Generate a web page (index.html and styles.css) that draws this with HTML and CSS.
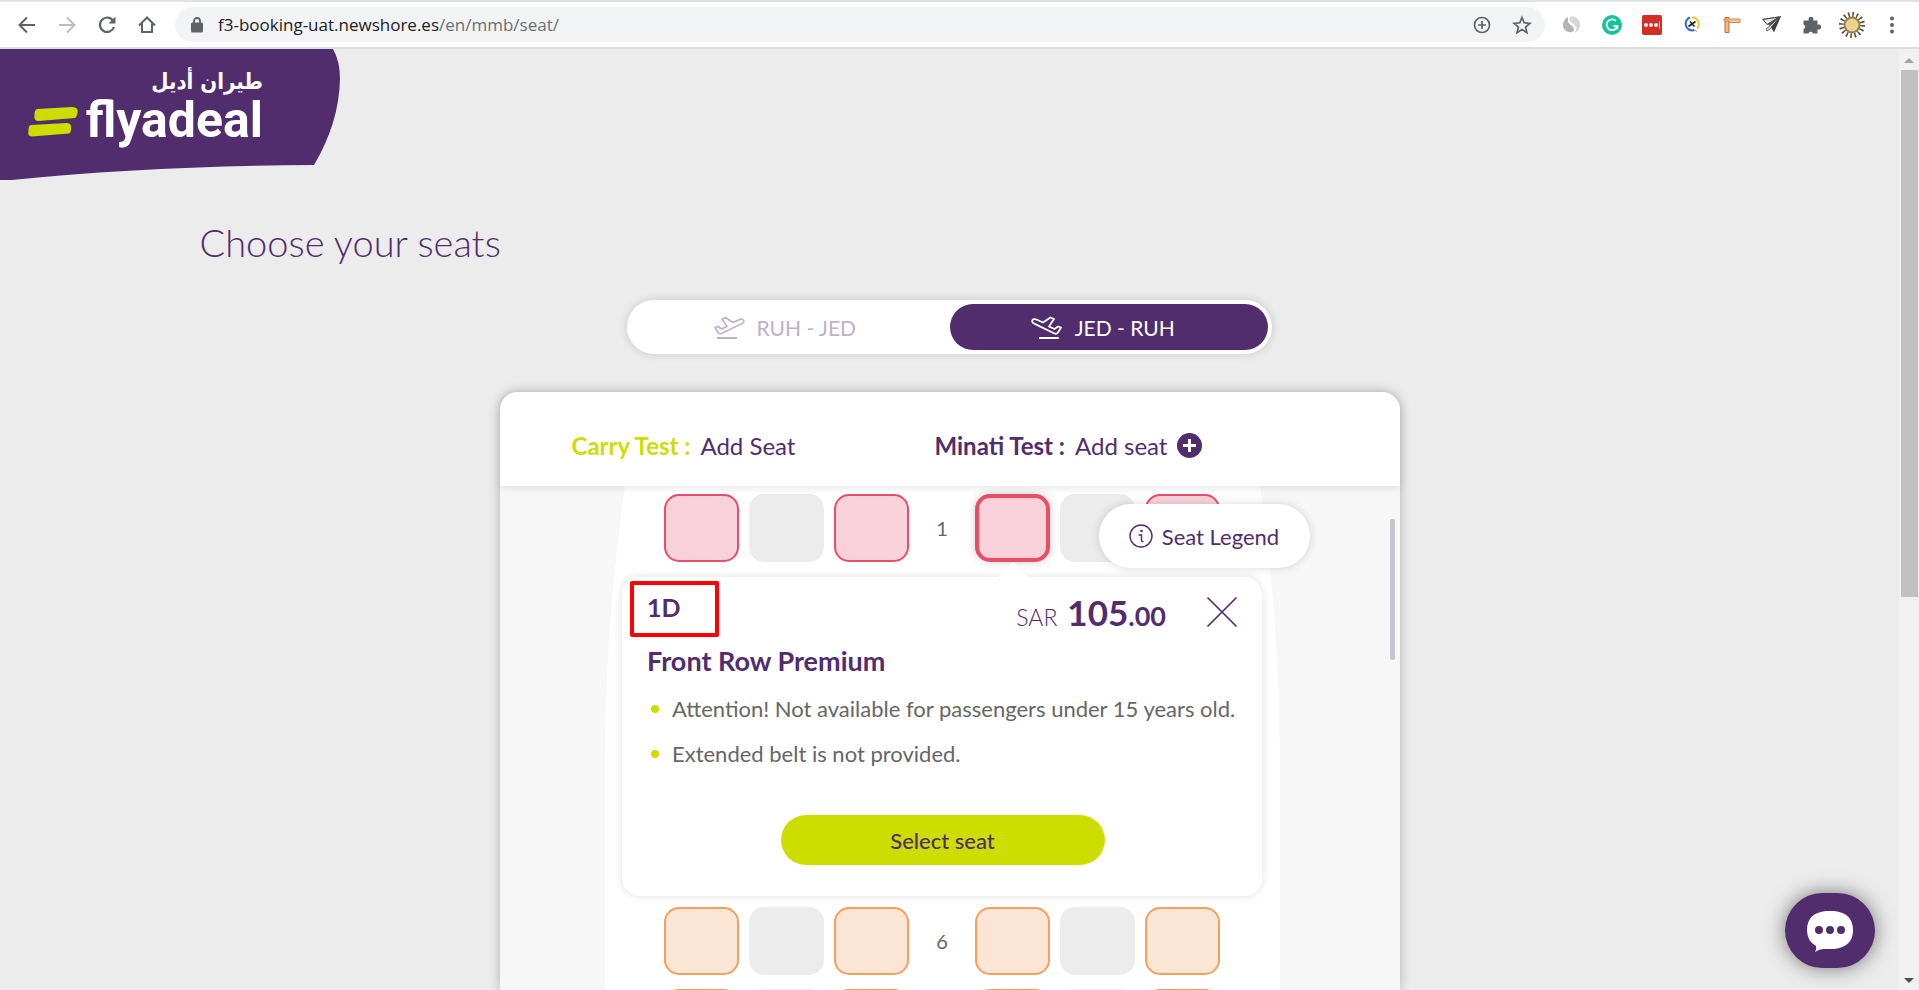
FILE: index.html
```html
<!DOCTYPE html>
<html lang="en">
<head>
<meta charset="utf-8">
<title>Choose your seats</title>
<link rel="stylesheet" href="styles.css">
</head>
<body>
<header class="toolbar">
  <nav class="nav-buttons">
    <button class="tool" aria-label="Back"><svg width="20" height="20" viewBox="0 0 20 20" fill="none" stroke="#5f6368" stroke-width="2"><path d="M18 10H3M10 2.500L2.500 10l7.500 7.500"/></svg></button>
    <button class="tool" aria-label="Forward"><svg width="20" height="20" viewBox="0 0 20 20" fill="none" stroke="#babcbe" stroke-width="2"><path d="M2 10h15M10 2.500l7.500 7.500-7.500 7.500"/></svg></button>
    <button class="tool" aria-label="Reload"><svg width="20" height="20" viewBox="0 0 20 20"><path d="M16 5.500A7.200 7.200 0 1 0 17 12" fill="none" stroke="#5f6368" stroke-width="2.200"/><path d="M18.500 1.500v7h-7z" fill="#5f6368"/></svg></button>
    <button class="tool" aria-label="Home"><svg width="20" height="20" viewBox="0 0 20 20" fill="none" stroke="#5f6368" stroke-width="2"><path d="M2 10.500L10 2.500l8 8M5 8.500V17h10V8.500"/></svg></button>
  </nav>
  <div class="omnibox">
    <svg class="lock" width="14" height="16" viewBox="0 0 14 16"><rect x="1" y="5.500" width="12" height="10" rx="1.500" fill="#5f6368"/><path d="M4 6V4a3 3 0 0 1 6 0v2" fill="none" stroke="#5f6368" stroke-width="1.800"/></svg>
    <span class="url">f3-booking-uat.newshore.es<span class="path">/en/mmb/seat/</span></span>
    <button class="tool" aria-label="Zoom"><svg width="18" height="18" viewBox="0 0 18 18" fill="none" stroke="#5f6368" stroke-width="1.700"><circle cx="9" cy="9" r="7.500"/><path d="M9 5v8M5 9h8"/></svg></button>
    <button class="tool" aria-label="Bookmark"><svg width="20" height="20" viewBox="0 0 20 20" fill="none" stroke="#5f6368" stroke-width="1.700"><path d="M10 2.500l2.200 5.300 5.700.5-4.300 3.700 1.300 5.600L10 14.600l-4.900 3 1.300-5.600L2.100 8.300l5.700-.5z"/></svg></button>
  </div>
  <div class="extensions">
    <button class="tool" aria-label="Similar sites"><svg width="20" height="20" viewBox="0 0 20 20"><path d="M6 2C0 5 0 12 3 15c3 3 8 3 9 0 1-4-6-5-6-9z" fill="#b4b4b4"/><path d="M8 2c5-2 11 3 10 9-1 4-3 6-6 7 3-3 3-6 0-8.500C9 7 6 6 8 2z" fill="#d6d6d6"/></svg></button>
    <button class="tool" aria-label="Writing check"><svg width="20" height="20" viewBox="0 0 20 20"><circle cx="10" cy="10" r="10" fill="#15c39a"/><path d="M14 6A5.400 5.400 0 1 0 15.300 11H11M15.300 11v3.500" fill="none" stroke="#fff" stroke-width="1.800"/></svg></button>
    <button class="tool" aria-label="Passwords"><svg width="20" height="20" viewBox="0 0 20 20"><rect width="20" height="20" rx="2" fill="#d32d27"/><g fill="#fff"><circle cx="4" cy="10" r="1.900"/><circle cx="9" cy="10" r="1.900"/><circle cx="14" cy="10" r="1.900"/></g><path d="M17.500 6.500v7" stroke="#fff"/></svg></button>
    <button class="tool" aria-label="Compass"><svg width="20" height="20" viewBox="0 0 20 20" fill="none"><path d="M8 2.500A6.600 6.600 0 1 0 12.500 15" stroke="#2f66c9" stroke-width="2"/><path d="M10 2.500a6.600 6.600 0 0 1 5 11" stroke="#fbc02d" stroke-width="2"/><path d="M6.500 11.500l7-5M8 6.500l4.500 5" stroke="#222" stroke-width="1.600"/><path d="M13 15l2 2" stroke="#aaa"/></svg></button>
    <button class="tool" aria-label="Ruler"><svg width="20" height="20" viewBox="0 0 20 20"><path d="M3 2.500h4v15H3z" fill="#f3b98a" stroke="#b9713a"/><path d="M2 4h16v3.500H7.500V6H2z" fill="#f6c49a" stroke="#d08a52"/></svg></button>
    <button class="tool" aria-label="Send"><svg width="22" height="20" viewBox="0 0 22 20"><path d="M1 4L20 1 13 17l-3-5z" fill="#555"/><path d="M2 4.500L18 2 6 9.500z" fill="#e8e8e8" stroke="#444"/><path d="M5 14l14-12-9 11-4 3z" fill="#ddd" stroke="#444" stroke-width=".8"/><path d="M20 1l-7 16-3-5z" fill="#3f3f3f"/></svg></button>
    <button class="tool" aria-label="Extensions"><svg width="20" height="20" viewBox="0 0 20 20" fill="#5f6368"><path d="M1.500 5.500h5.300a2.500 2.500 0 1 1 4.400 0h4.300v4.300a2.500 2.500 0 1 1 0 4.400v4.300h-4.500a2.400 2.400 0 0 0-4.600 0H1.500V14a2.400 2.400 0 0 0 0-4.500z"/></svg></button>
    <button class="tool" aria-label="Profile"><svg width="28" height="28" viewBox="0 0 28 28"><circle cx="14" cy="14" r="10.500" fill="none" stroke="#5a523b" stroke-width="5" stroke-dasharray="1.600 2.523"/><circle cx="14" cy="14" r="8.500" fill="#8f8259"/><circle cx="14" cy="14" r="6.500" fill="#ecd28a"/></svg></button>
    <button class="tool" aria-label="Menu"><svg width="20" height="20" viewBox="0 0 20 20" fill="#5f6368"><circle cx="10" cy="3.500" r="2"/><circle cx="10" cy="10" r="2"/><circle cx="10" cy="16.500" r="2"/></svg></button>
  </div>
</header>

<div class="viewport">
  <div class="page">
    <a class="brand" href="#">
      <svg class="brand-shape" width="340" height="131" viewBox="0 0 340 131"><path d="M0 0H333Q340 12 340 30Q339 74 314 116Q150 117 12 131H0z" fill="#522d6d"/><g fill="#cddd00"><path d="M37 60l35-2q7 0 5.500 6-1 5-3 5l-36 3q-5 0-4-6 0-5 2.500-6z"/><path d="M31 76l36-2q5 0 4 6 0 4-2 4.500l-37 3q-5 0-3.500-6.500 0-4.500 2.500-5z"/></g></svg>
      <span class="brand-text"><span class="brand-ar" lang="ar" dir="rtl">طيران أديل</span><span class="brand-en">flyadeal</span></span>
    </a>
    <main class="content">
      <h1 class="title">Choose your seats</h1>
      <div class="journeys">
        <button class="journey"><svg width="32" height="24" viewBox="0 0 32 24" fill="none" stroke="currentColor" stroke-width="1.600" stroke-linejoin="round"><path d="M2 12.500l3-1 3.500 2.500 5.500-2.500-5-7.500 3.500-1.500 7.500 5 6-2.800q4-1.500 4.800 1 .5 2-2.500 3.200L8.500 18.500q-2 .8-3.500-1z"/><path d="M4 23h20" stroke-width="2"/></svg>RUH - JED</button>
        <button class="journey active"><svg width="32" height="24" viewBox="0 0 32 24" fill="none" stroke="currentColor" stroke-width="1.800" stroke-linejoin="round"><path d="M30 12.500l-3-1-3.500 2.500-5.500-2.500 5-7.500-3.500-1.500-7.500 5-6-2.800q-4-1.500-4.800 1-.5 2 2.500 3.200L23.500 18.500q2 .8 3.500-1z"/><path d="M8 23h20" stroke-width="2"/></svg>JED - RUH</button>
      </div>
      <section class="card">
        <div class="passengers">
          <div class="passenger"><strong class="name current">Carry Test :</strong><span>Add Seat</span></div>
          <div class="passenger"><strong class="name">Minati Test :</strong><span>Add seat</span><button class="add" aria-label="Add seat"><svg width="25" height="25" viewBox="0 0 25 25"><circle cx="12.500" cy="12.500" r="12.500" fill="#522d6d"/><path d="M12.500 6v13M6 12.500h13" stroke="#fff" stroke-width="3"/></svg></button></div>
        </div>
        <div class="cabin">
          <svg class="fuselage" width="675" height="510" viewBox="0 0 675 510"><path d="M20 0Q0 140 0 280V510H675V280Q675 140 655 0z" fill="#fff"/></svg>
          <div class="rows">
            <div class="row">
              <div class="block"><button class="seat premium" aria-label="1A"></button><button class="seat" disabled aria-label="1B"></button><button class="seat premium" aria-label="1C"></button></div>
              <span class="number">1</span>
              <div class="block"><button class="seat premium selected" aria-label="1D"></button><button class="seat" disabled aria-label="1E"></button><button class="seat premium" aria-label="1F"></button></div>
            </div>
            <article class="detail">
              <div class="detail-top">
                <span class="code">1D</span>
                <span class="price"><span class="currency">SAR</span><span class="amount">105<span class="cents">.00</span></span></span>
                <button class="close" aria-label="Close"><svg width="32" height="32" viewBox="0 0 32 32" stroke="#522d6d" stroke-width="1.700"><path d="M1.500 1.500l29 29M30.500 1.500l-29 29"/></svg></button>
              </div>
              <h2 class="detail-name">Front Row Premium</h2>
              <ul class="notes"><li>Attention! Not available for passengers under 15 years old.</li><li>Extended belt is not provided.</li></ul>
              <button class="select">Select seat</button>
              <span class="marker"></span>
            </article>
            <div class="row">
              <div class="block"><button class="seat front" aria-label="6A"></button><button class="seat" disabled aria-label="6B"></button><button class="seat front" aria-label="6C"></button></div>
              <span class="number">6</span>
              <div class="block"><button class="seat front" aria-label="6D"></button><button class="seat" disabled aria-label="6E"></button><button class="seat front" aria-label="6F"></button></div>
            </div>
            <div class="row">
              <div class="block"><button class="seat front" aria-label="7A"></button><button class="seat" disabled aria-label="7B"></button><button class="seat front" aria-label="7C"></button></div>
              <span class="number"></span>
              <div class="block"><button class="seat front" aria-label="7D"></button><button class="seat" disabled aria-label="7E"></button><button class="seat front" aria-label="7F"></button></div>
            </div>
          </div>
          <span class="cabin-thumb"></span>
          <button class="legend"><svg width="24" height="24" viewBox="0 0 24 24" fill="none" stroke="#522d6d" stroke-width="1.400"><circle cx="12" cy="12" r="11"/><path d="M9.500 11h3v5q0 2 2 1.500"/><circle cx="12.500" cy="7" r=".6"/></svg>Seat Legend</button>
        </div>
      </section>
    </main>
    <button class="chat" aria-label="Chat"><svg width="48" height="42" viewBox="0 0 48 42"><path d="M20 1h8q19 2 19 19t-19 19H18q-5 0-9 3 2-3 1-6Q1 31 1 20 1 3 20 1z" fill="#fff"/><g fill="#522d6d"><circle cx="13" cy="20" r="4"/><circle cx="24" cy="20" r="4"/><circle cx="35" cy="20" r="4"/></g></svg></button>
  </div>
  <div class="scrollbar">
    <svg width="10" height="5" viewBox="0 0 10 5"><path d="M0 5l5-5 5 5z" fill="#a3a3a3"/></svg>
    <span class="thumb"></span>
    <svg width="10" height="5" viewBox="0 0 10 5"><path d="M0 0l5 5 5-5z" fill="#505050"/></svg>
  </div>
</div>
</body>
</html>
```

FILE: styles.css
```css
*, *::before, *::after { box-sizing: border-box; }
body {
  margin: 0;
  height: 100vh;
  overflow: hidden;
  display: flex;
  flex-direction: column;
  font-family: Lato, "Open Sans", sans-serif;
  color: #522d6d;
  background: #ececec;
}
button { font: inherit; color: inherit; border: 0; padding: 0; background: none; }
svg { display: block; flex: none; }

/* Browser toolbar */
.toolbar {
  flex: none;
  height: 49px;
  display: flex;
  align-items: center;
  padding: 0 7px;
  border-top: 2px solid #dee1e6;
  border-bottom: 2px solid #dadce0;
  background: #fff;
}
.tool { width: 40px; height: 36px; display: grid; place-items: center; flex: none; }
.nav-buttons, .extensions { display: flex; }
.extensions { margin-left: 7px; }
.omnibox {
  flex: 1;
  height: 35px;
  margin-left: 8px;
  padding: 0 3px 0 15px;
  display: flex;
  align-items: center;
  border-radius: 18px;
  background: #f1f3f4;
}
.url { flex: 1; margin-left: 14px; font: 17px "Open Sans", sans-serif; color: #202124; }
.path { color: #6b6f73; }

/* Page frame */
.viewport { flex: 1; min-height: 0; display: flex; }
.page { flex: 1; display: flex; flex-direction: column; position: relative; overflow: hidden; }
.scrollbar {
  width: 20px;
  padding: 9px 0 7px;
  display: flex;
  flex-direction: column;
  align-items: center;
  justify-content: space-between;
  background: #f1f1f1;
}
.thumb { width: 17px; height: 57%; margin: 7px 0 auto; background: #c1c1c1; }

.brand { flex: none; display: block; position: relative; width: 340px; text-decoration: none; color: #fff; }
.brand-text {
  position: absolute;
  left: 88px;
  top: 20px;
  width: 175px;
  display: flex;
  flex-direction: column;
  align-items: flex-end;
}
.brand-ar { font: bold 22px/26px "DejaVu Sans Condensed", "DejaVu Sans", sans-serif; }
.brand-en { font: bold 50px/50px Roboto, sans-serif; }

.content {
  flex: 1;
  min-height: 0;
  width: 100%;
  max-width: 1500px;
  margin: 0 auto;
  display: flex;
  flex-direction: column;
  align-items: center;
}
.title { align-self: flex-start; margin: 41px 0 36px; font-size: 38px; line-height: 43px; font-weight: 300; }

.journeys {
  width: 100%;
  max-width: 645px;
  padding: 4px;
  display: flex;
  border-radius: 27px;
  background: #fff;
  box-shadow: 0 0 10px rgba(0, 0, 0, .15);
}
.journey {
  flex: 1;
  height: 46px;
  padding-right: 12px;
  display: flex;
  align-items: center;
  justify-content: center;
  gap: 12px;
  border-radius: 23px;
  font-size: 21px;
  color: #bfb0cb;
}
.journey.active { color: #fff; background: #522d6d; }

.card {
  flex: 1;
  min-height: 0;
  width: 100%;
  max-width: 900px;
  margin-top: 38px;
  display: flex;
  flex-direction: column;
  border-radius: 18px 18px 0 0;
  background: #f7f7f7;
  box-shadow: 0 0 12px rgba(0, 0, 0, .25);
}
.passengers {
  position: relative;
  z-index: 1;
  flex: none;
  height: 94px;
  padding: 12px 72px 0;
  display: grid;
  grid-template-columns: 363px 1fr;
  align-items: center;
  border-radius: 18px 18px 0 0;
  background: #fff;
  box-shadow: 0 2px 8px rgba(0, 0, 0, .1);
  font-size: 24px;
}
.passenger { display: flex; align-items: center; gap: 10px; }
.current { color: #cddd00; }

/* Seat map */
.cabin { flex: 1; min-height: 0; position: relative; padding-right: 15px; }
.fuselage { position: absolute; top: 0; left: 105px; }
.rows { position: relative; height: 100%; overflow: hidden; padding-top: 8px; display: flex; flex-direction: column; align-items: center; }
.row { flex: none; display: flex; align-items: center; margin-bottom: 14px; }
.block { display: flex; gap: 10px; }
.number { width: 66px; text-align: center; font-size: 20px; color: #666; }
.seat { width: 75px; height: 68px; border-radius: 15px; background: #ececec; }
.premium { border: 2px solid #e94e69; background: #f9d1da; }
.front { border: 2px solid #f3a05f; background: #fbe6d6; }
.selected { border-width: 4px; box-shadow: 0 0 10px rgba(0, 0, 0, .2); }

.detail {
  position: relative;
  flex: none;
  width: 640px;
  margin: 1px 0 11px;
  padding: 15px 24px 31px 25px;
  display: flex;
  flex-direction: column;
  border-radius: 18px;
  background: #fff;
  box-shadow: 0 0 10px rgba(0, 0, 0, .12);
}
.marker {
  position: absolute;
  left: 376px;
  top: -15px;
  width: 30px;
  height: 15px;
  background: #fff;
  clip-path: polygon(50% 0, 100% 100%, 0 100%);
}
.detail-top { display: flex; align-items: center; height: 40px; }
.code { align-self: flex-start; font-size: 25px; line-height: 30px; font-weight: 700; position: relative; }
.code::after {
  content: "";
  position: absolute;
  left: -17px;
  top: -11px;
  width: 89px;
  height: 56px;
  border: 4px solid #f00;
  border-radius: 2px;
}
.price { margin-left: auto; display: flex; align-items: baseline; gap: 10px; }
.currency { font-size: 23px; font-weight: 300; }
.amount { font-size: 35px; font-weight: 700; }
.cents { font-size: 27px; }
.close { margin-left: 40px; }
.detail-name { margin: 13px 0 0; font-size: 27px; line-height: 32px; font-weight: 700; }
.notes { list-style: none; margin: 9px 0 0; padding: 0; font-size: 22px; line-height: 45px; color: #666; }
.notes li { display: flex; align-items: center; gap: 13px; }
.notes li::before { content: ""; width: 8px; height: 8px; margin-left: 4px; border-radius: 50%; background: #cddd00; }
.select {
  align-self: center;
  width: 324px;
  height: 50px;
  margin-top: 39px;
  border-radius: 25px;
  background: #cddd00;
  font-size: 22px;
  font-weight: 500;
}
.legend {
  position: absolute;
  right: 90px;
  top: 18px;
  width: 211px;
  height: 64px;
  display: flex;
  align-items: center;
  justify-content: center;
  gap: 9px;
  border-radius: 32px;
  background: #fff;
  box-shadow: 0 0 10px rgba(0, 0, 0, .15);
  font-size: 22px;
}
.cabin-thumb { position: absolute; right: 5px; top: 33px; width: 5px; height: 141px; border-radius: 2px; background: #c5c5cd; }

.chat {
  position: absolute;
  right: 24px;
  bottom: 22px;
  width: 90px;
  height: 75px;
  display: grid;
  place-items: center;
  border-radius: 38px;
  background: #522d6d;
  box-shadow: 0 0 20px rgba(0, 0, 0, .5);
}
```
